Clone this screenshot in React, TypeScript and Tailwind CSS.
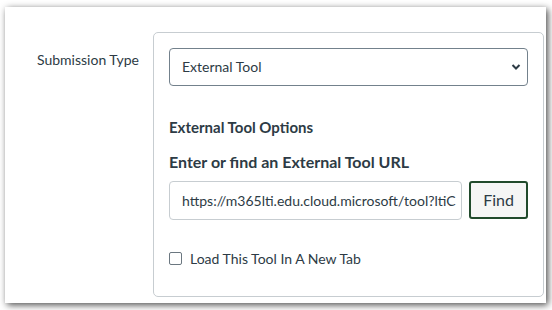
import React from 'react';

const App: React.FC = () => {
    return (
        <div className="w-[552px] h-[310px] bg-white pt-[7px] pl-[5px] font-['Lato',sans-serif] text-[#2d3b45]">
            <div className="w-[541px] h-[296px] bg-white shadow-[2px_2px_7px_rgba(0,0,0,0.7)] flex pt-[25px]">
                <div className="w-[148px] pl-[32px] pt-[17px] text-[14px]">Submission Type</div>
                <div className="w-[391px] h-[265px] border border-[#c7cdd1] rounded-[5px] px-[15px] pt-[15px]">
                    <div className="relative w-[359px] h-[38px] border border-[#73818c] rounded-[4px] flex items-center pl-[12px] pb-[1px] text-[14px]">
                        External Tool
                        <svg className="absolute right-[6px] top-[13px]" width="10" height="10" viewBox="0 0 10 10">
                            <path d="M1.5 3 L5 6.5 L8.5 3" fill="none" stroke="#2d3b45" strokeWidth="2" />
                        </svg>
                    </div>
                    <div className="mt-[30px] text-[15px] leading-[22px] font-bold">External Tool Options</div>
                    <div className="mt-[12px] text-[16px] leading-[24px] font-bold">Enter or find an External Tool URL</div>
                    <div className="mt-[7px] flex gap-[7px]">
                        <div className="w-[293px] h-[39px] border border-[#c7cdd1] rounded-[4px] flex items-center pl-[12px] pr-[5px] text-[14px] whitespace-nowrap">
                            <span className="block min-w-0 overflow-hidden">https://m365lti.edu.cloud.microsoft/tool?ltiClientId=0</span>
                        </div>
                        <div className="w-[59px] h-[38px] border-2 border-[#214a2c] rounded-[3px] bg-[#f5f5f5] flex items-center justify-center text-[16px]">
                            Find
                        </div>
                    </div>
                    <div className="mt-[28px] flex items-center gap-[8px] text-[14px] leading-[21px]">
                        <span className="w-[13px] h-[13px] border border-[#6b7780] rounded-[2px] bg-white" />
                        Load This Tool In A New Tab
                    </div>
                </div>
            </div>
        </div>
    );
};

export default App;
